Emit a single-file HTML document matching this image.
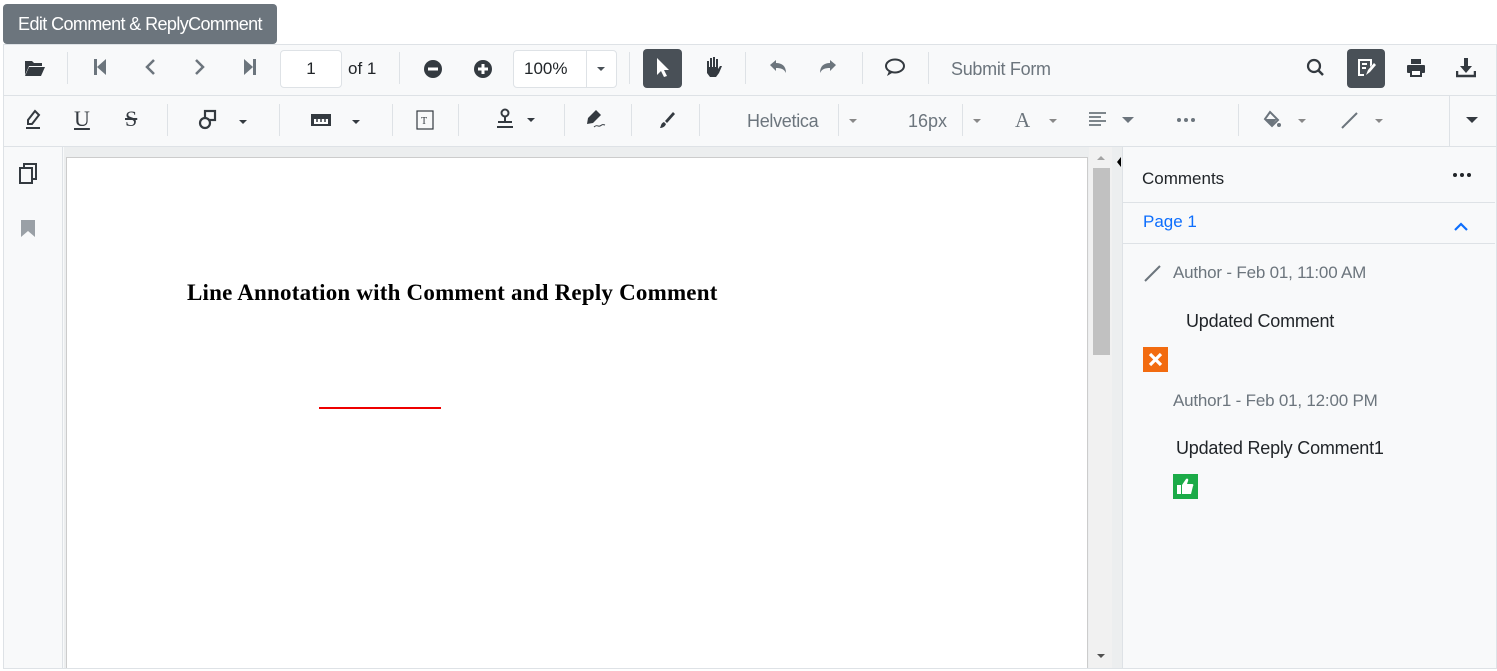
<!DOCTYPE html>
<html><head><meta charset="utf-8"><style>
*{box-sizing:border-box;margin:0;padding:0}
html,body{width:1497px;height:671px;overflow:hidden}
body{background:#fff;font-family:"Liberation Sans",Arial,sans-serif;position:relative;color:#212529}
.a{position:absolute}
.btn{left:3px;top:4px;width:274px;height:40px;background:#6c757d;color:#fff;border-radius:4px;font-size:18px;line-height:40px;text-align:center;letter-spacing:-0.6px}
.wrap{left:3px;top:44px;width:1494px;height:625px;border:1px solid #dee2e6;background:#f8f9fa}
.tb{left:4px;width:1492px;height:51px;background:#f8f9fa;border-bottom:1px solid #dee2e6}
.sep{position:absolute;width:1px;height:32px;background:#dee2e6}
svg{position:absolute}
.gt{position:absolute;color:#6c757d;font-size:17px}
</style></head><body>
<div class="a btn">Edit Comment &amp; ReplyComment</div>
<div class="a wrap"></div>
<div class="a tb" style="top:45px"></div>
<div class="a tb" style="top:96px"></div>

<svg style="left:24px;top:59px" width="22" height="18" viewBox="0 0 22 18"><path d="M1 2h7l2 2h8v3H5L1 16z" fill="#343a40"/><path d="M5 8h16l-4 9H1z" fill="#343a40"/></svg>
<div class="sep" style="left:67px;top:52px"></div>
<svg style="left:92px;top:58px" width="16" height="18"><rect x="2" y="1" width="3" height="16" fill="#6c757d"/><path d="M14 1v16L5 9z" fill="#6c757d"/></svg>
<svg style="left:143px;top:58px" width="14" height="18"><path d="M11 2L4 9l7 7" stroke="#6c757d" stroke-width="2.5" fill="none"/></svg>
<svg style="left:193px;top:58px" width="14" height="18"><path d="M3 2l7 7-7 7" stroke="#6c757d" stroke-width="2.5" fill="none"/></svg>
<svg style="left:242px;top:58px" width="16" height="18"><path d="M2 1v16l9-8z" fill="#6c757d"/><rect x="11" y="1" width="3" height="16" fill="#6c757d"/></svg>
<div class="a" style="left:280px;top:50px;width:62px;height:38px;background:#fff;border:1px solid #dee2e6;border-radius:4px;text-align:center;line-height:36px;font-size:17px">1</div>
<div class="a" style="left:348px;top:59px;font-size:17px">of 1</div>
<div class="sep" style="left:399px;top:52px"></div>
<svg style="left:423px;top:59px" width="20" height="20"><circle cx="10" cy="10" r="9" fill="#343a40"/><rect x="5" y="8.5" width="10" height="3" fill="#fff"/></svg>
<svg style="left:473px;top:59px" width="20" height="20"><circle cx="10" cy="10" r="9" fill="#343a40"/><rect x="5" y="8.5" width="10" height="3" fill="#fff"/><rect x="8.5" y="5" width="3" height="10" fill="#fff"/></svg>
<div class="a" style="left:513px;top:50px;width:104px;height:38px;background:#fff;border:1px solid #dee2e6;border-radius:4px;font-size:17px;line-height:36px;padding-left:10px">100%</div>
<div class="a" style="left:586px;top:51px;width:1px;height:36px;background:#dee2e6"></div>
<svg style="left:596px;top:66px" width="10" height="6"><path d="M1 1h8L5 5z" fill="#495057"/></svg>
<div class="sep" style="left:629px;top:52px"></div>
<div class="a" style="left:643px;top:49px;width:39px;height:39px;background:#495057;border-radius:4px"></div>
<svg style="left:654px;top:56px" width="16" height="24"><path d="M3 2v17l4-4 3 6 3-1-3-6h5z" fill="#fff"/></svg>
<svg style="left:703px;top:56px" width="20" height="22"><path d="M4 10V5h2v6h1V2h2v9h1V1h2v10h1V3h2v10l2-3h2l-3 7-3 4H7l-3-4z" fill="#343a40"/></svg>
<div class="sep" style="left:745px;top:52px"></div>
<svg style="left:768px;top:59px" width="20" height="16"><path d="M2 6l6-5v3c6 0 10 3 10 10-2-4-5-5-10-5v3z" fill="#6c757d"/></svg>
<svg style="left:818px;top:59px" width="20" height="16"><path d="M18 6l-6-5v3C6 4 2 7 2 14c2-4 5-5 10-5v3z" fill="#6c757d"/></svg>
<div class="sep" style="left:862px;top:52px"></div>
<svg style="left:884px;top:58px" width="22" height="20"><ellipse cx="11" cy="8" rx="9" ry="6.5" stroke="#343a40" stroke-width="2" fill="none"/><path d="M5 13l-2 5 5-3" fill="#343a40"/></svg>
<div class="sep" style="left:928px;top:52px"></div>
<div class="gt" style="left:951px;top:59px;font-size:18px;letter-spacing:-0.3px">Submit Form</div>
<svg style="left:1306px;top:58px" width="20" height="20"><circle cx="8" cy="8" r="6" stroke="#343a40" stroke-width="2.2" fill="none"/><path d="M12 12l5 5" stroke="#343a40" stroke-width="2.5"/></svg>
<div class="a" style="left:1347px;top:49px;width:38px;height:39px;background:#495057;border-radius:4px"></div>
<svg style="left:1356px;top:57px" width="20" height="22"><path d="M2 2h14v6l-2 2V4H4v13h4v2H2z" fill="#fff"/><rect x="6" y="6" width="5" height="2" fill="#fff"/><rect x="6" y="10" width="4" height="2" fill="#fff"/><path d="M10 18l2-5 6-7 2 2-6 7z" fill="#fff"/></svg>
<svg style="left:1406px;top:58px" width="20" height="20"><rect x="5" y="1" width="10" height="5" fill="#343a40"/><rect x="1" y="7" width="18" height="8" rx="1" fill="#343a40"/><rect x="5" y="12" width="10" height="6" fill="#fff" stroke="#343a40" stroke-width="2"/></svg>
<svg style="left:1456px;top:57px" width="20" height="21"><path d="M8 1h4v8h4l-6 7-6-7h4z" fill="#343a40"/><path d="M1 14v5h18v-5" stroke="#343a40" stroke-width="2.5" fill="none"/></svg>

<svg style="left:24px;top:109px" width="20" height="22"><path d="M11 2l4 4-7 9H4v-4z" stroke="#343a40" stroke-width="2" fill="none"/><rect x="2" y="18" width="14" height="2" fill="#343a40"/></svg>
<div class="a" style="left:74px;top:106px;font-family:'Liberation Serif',serif;font-size:22px;text-decoration:underline;color:#343a40">U</div>
<div class="a" style="left:125px;top:106px;font-family:'Liberation Serif',serif;font-size:22px;text-decoration:line-through;color:#343a40">S</div>
<div class="sep" style="left:167px;top:104px"></div>
<svg style="left:198px;top:109px" width="20" height="22"><rect x="7" y="2" width="10" height="9" stroke="#343a40" stroke-width="2.2" fill="none"/><circle cx="7" cy="14" r="5" stroke="#343a40" stroke-width="2.2" fill="#f8f9fa"/></svg>
<svg style="left:238px;top:119px" width="10" height="6"><path d="M1 1h8L5 5z" fill="#343a40"/></svg>
<div class="sep" style="left:279px;top:104px"></div>
<svg style="left:310px;top:112px" width="22" height="16"><rect x="1" y="2" width="20" height="12" fill="#343a40"/><rect x="4" y="7" width="14" height="5" fill="#fff"/><path d="M7 7v3M11 7v3M15 7v3" stroke="#343a40" stroke-width="1.5"/></svg>
<svg style="left:351px;top:119px" width="10" height="6"><path d="M1 1h8L5 5z" fill="#343a40"/></svg>
<div class="sep" style="left:392px;top:104px"></div>
<svg style="left:415px;top:109px" width="20" height="22"><rect x="2" y="2" width="16" height="18" stroke="#343a40" stroke-width="1.2" fill="none"/><text x="6" y="15" font-size="10" font-family="Liberation Serif" fill="#343a40">T</text></svg>
<div class="sep" style="left:458px;top:104px"></div>
<svg style="left:495px;top:108px" width="20" height="22"><circle cx="10" cy="5" r="3.5" stroke="#343a40" stroke-width="2" fill="none"/><path d="M10 8v6M3 14h14" stroke="#343a40" stroke-width="2"/><rect x="2" y="18" width="16" height="2" fill="#343a40"/></svg>
<svg style="left:526px;top:117px" width="10" height="6"><path d="M1 1h8L5 5z" fill="#343a40"/></svg>
<div class="sep" style="left:564px;top:104px"></div>
<svg style="left:584px;top:108px" width="24" height="22"><path d="M12 2l5 5-8 8-6 1 1-6z" fill="#343a40"/><path d="M10 19c3-3 4 0 6-1s2-2 5-1" stroke="#343a40" stroke-width="1" fill="none"/></svg>
<div class="sep" style="left:631px;top:104px"></div>
<svg style="left:657px;top:110px" width="20" height="20"><path d="M16 2l2 2-8 9-2-2z" fill="#343a40"/><path d="M7 12l2 2c-1 3-4 4-6 4 1-2 1-5 4-6z" fill="#343a40"/></svg>
<div class="sep" style="left:699px;top:104px"></div>
<div class="gt" style="left:747px;top:111px;font-size:18px;letter-spacing:-0.3px">Helvetica</div>
<div class="sep" style="left:838px;top:104px"></div>
<svg style="left:848px;top:118px" width="10" height="6"><path d="M1 1h8L5 5z" fill="#888"/></svg>
<div class="gt" style="left:908px;top:111px;font-size:18px">16px</div>
<div class="sep" style="left:962px;top:104px"></div>
<svg style="left:972px;top:118px" width="10" height="6"><path d="M1 1h8L5 5z" fill="#888"/></svg>
<div class="a" style="left:1015px;top:108px;font-family:'Liberation Serif',serif;font-size:21px;color:#6c757d">A</div>
<svg style="left:1048px;top:118px" width="10" height="6"><path d="M1 1h8L5 5z" fill="#888"/></svg>
<svg style="left:1088px;top:111px" width="20" height="16"><path d="M1 2h17M1 6h12M1 10h17M1 14h12" stroke="#6c757d" stroke-width="1.8"/></svg>
<svg style="left:1121px;top:116px" width="14" height="8"><path d="M1 1h12L7 7z" fill="#6c757d"/></svg>
<svg style="left:1176px;top:117px" width="20" height="6"><circle cx="3" cy="3" r="2" fill="#6c757d"/><circle cx="10" cy="3" r="2" fill="#6c757d"/><circle cx="17" cy="3" r="2" fill="#6c757d"/></svg>
<div class="sep" style="left:1238px;top:104px"></div>
<svg style="left:1262px;top:110px" width="20" height="20"><path d="M8 2l8 8-6 6-7-7z" stroke="#6c757d" stroke-width="2" fill="none"/><path d="M4 9h11l-5 6z" fill="#6c757d"/><circle cx="17" cy="15" r="2" fill="#6c757d"/></svg>
<svg style="left:1297px;top:118px" width="10" height="6"><path d="M1 1h8L5 5z" fill="#888"/></svg>
<svg style="left:1340px;top:110px" width="20" height="20"><path d="M2 18L17 3" stroke="#6c757d" stroke-width="2"/></svg>
<svg style="left:1374px;top:118px" width="10" height="6"><path d="M1 1h8L5 5z" fill="#888"/></svg>
<div class="a" style="left:1449px;top:96px;width:1px;height:50px;background:#dee2e6"></div>
<svg style="left:1465px;top:116px" width="14" height="8"><path d="M1 1h12L7 7z" fill="#343a40"/></svg>

<div class="a" style="left:4px;top:147px;width:59px;height:521px;background:#f8f9fa;border-right:1px solid #dee2e6"></div>
<svg style="left:18px;top:163px" width="20" height="22"><rect x="6" y="1" width="12" height="15" stroke="#343a40" stroke-width="2" fill="#f8f9fa"/><rect x="2" y="5" width="12" height="15" stroke="#343a40" stroke-width="2" fill="#f8f9fa"/></svg>
<svg style="left:20px;top:219px" width="16" height="19"><path d="M1 1h14v17l-7-6-7 6z" fill="#9aa0a6"/></svg>
<div class="a" style="left:64px;top:147px;width:1058px;height:521px;background:#eceeef"></div>
<div class="a" style="left:66px;top:157px;width:1022px;height:511px;background:#fff;border:1px solid #ccc;border-bottom:none"></div>
<div class="a" style="left:187px;top:280px;font-family:'Liberation Serif',serif;font-weight:bold;font-size:23px;letter-spacing:0.2px;color:#000">Line Annotation with Comment and Reply Comment</div>
<div class="a" style="left:319px;top:407px;width:122px;height:2px;background:#e00"></div>
<div class="a" style="left:1089px;top:147px;width:23px;height:521px;background:#f1f1f1"></div>
<div class="a" style="left:1093px;top:168px;width:17px;height:187px;background:#c1c1c1"></div>
<svg style="left:1096px;top:155px" width="10" height="6"><path d="M1 5h8L5 1z" fill="#a3a3a3"/></svg>
<svg style="left:1096px;top:653px" width="10" height="6"><path d="M1 1h8L5 5z" fill="#505050"/></svg>
<svg style="left:1116px;top:156px" width="6" height="12"><path d="M5 1v10L1 6z" fill="#000"/></svg>

<div class="a" style="left:1122px;top:147px;width:374px;height:521px;background:#f8f9fa;border-left:1px solid #dee2e6"></div>
<div class="a" style="left:1123px;top:202px;width:372px;height:1px;background:#dee2e6"></div>
<div class="a" style="left:1123px;top:243px;width:372px;height:1px;background:#dee2e6"></div>
<div class="a" style="left:1142px;top:169px;font-size:17px;color:#212529">Comments</div>
<svg style="left:1452px;top:172px" width="20" height="6"><circle cx="3" cy="3" r="2" fill="#212529"/><circle cx="10" cy="3" r="2" fill="#212529"/><circle cx="17" cy="3" r="2" fill="#212529"/></svg>
<div class="a" style="left:1143px;top:212px;font-size:17px;color:#0d6efd">Page 1</div>
<svg style="left:1453px;top:222px" width="16" height="10"><path d="M2 8l6-6 6 6" stroke="#0d6efd" stroke-width="2.2" fill="none"/></svg>
<svg style="left:1143px;top:263px" width="20" height="20"><path d="M2 18L17 3" stroke="#6c757d" stroke-width="2"/></svg>
<div class="a" style="left:1173px;top:263px;font-size:17px;letter-spacing:-0.2px;color:#6c757d">Author - Feb 01, 11:00 AM</div>
<div class="a" style="left:1186px;top:311px;font-size:18px;letter-spacing:-0.2px;color:#212529">Updated Comment</div>
<div class="a" style="left:1143px;top:347px;width:25px;height:25px;background:#f26b0f"></div>
<svg style="left:1143px;top:347px" width="25" height="25"><path d="M7 7l11 11M18 7L7 18" stroke="#fff" stroke-width="3.2"/></svg>
<div class="a" style="left:1173px;top:391px;font-size:17px;letter-spacing:-0.2px;color:#6c757d">Author1 - Feb 01, 12:00 PM</div>
<div class="a" style="left:1176px;top:438px;font-size:18px;letter-spacing:-0.2px;color:#212529">Updated Reply Comment1</div>
<div class="a" style="left:1173px;top:474px;width:25px;height:25px;background:#1cab48"></div>
<svg style="left:1173px;top:474px" width="25" height="25"><rect x="4" y="11" width="4" height="9" fill="#fff"/><path d="M9 11l4-6c1-1 3 0 2 2l-1 3h5c1 0 2 1 1 2l-2 8H9z" fill="#fff"/></svg>
</body></html>
